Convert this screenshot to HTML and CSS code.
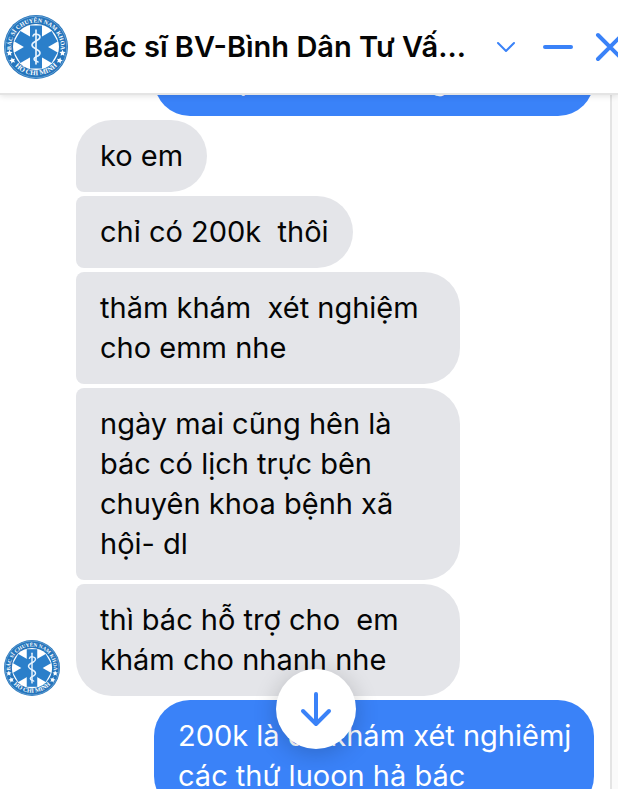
FILE: index.html
```html
<!DOCTYPE html>
<html lang="vi">
<head>
    <meta charset="UTF-8">
    <meta name="viewport" content="width=device-width, initial-scale=1.0">
    <title>Chat</title>
    <link rel="stylesheet" href="styles.css">
</head>
<body>
    <!-- Clinic badge, shared by the header and the message list -->
    <svg class="symbols" width="0" height="0" aria-hidden="true">
        <symbol id="badge" viewBox="0 0 64 64">
            <circle cx="32" cy="32" r="32" fill="#2474bb"/>
            <circle cx="32" cy="32" r="30.8" fill="none" stroke="#8dbbe2" stroke-width="0.6"/>
            <circle cx="32" cy="32" r="23" fill="#fff"/>
            <g fill="#2b7fca">
                <rect x="26" y="10.5" width="12" height="43"/>
                <rect x="26" y="10.5" width="12" height="43" transform="rotate(60 32 32)"/>
                <rect x="26" y="10.5" width="12" height="43" transform="rotate(120 32 32)"/>
            </g>
            <path d="M32 15V49" stroke="#fff" stroke-width="1.5" stroke-linecap="round"/>
            <path d="M29 21C30 18 36 19 36 22C36 26 28 26 28 30C28 34 36 34 36 38C36 42 30 41 30 44C30 46 33 46 34 47" fill="none" stroke="#e8f4ff" stroke-width="1.6" stroke-linecap="round"/>
            <path id="arc-top" d="M7.5 36A24.8 24.8 0 1 1 56.5 36" fill="none"/>
            <path id="arc-bottom" d="M6 44A29 29 0 0 0 58 44" fill="none"/>
            <text class="badge-text"><textPath href="#arc-top" startOffset="50%">BÁC SĨ CHUYÊN NAM KHOA</textPath></text>
            <text class="badge-text badge-city"><textPath href="#arc-bottom" startOffset="50%">HỒ CHÍ MINH</textPath></text>
            <g fill="#fff">
                <path id="star" d="M5.5 34.8l.9 2 2.2.3-1.6 1.5.4 2.2-1.9-1.1-1.9 1.1.4-2.2-1.6-1.5 2.2-.3z"/>
                <use href="#star" transform="rotate(-17 32 32)"/>
                <use href="#star" x="53"/>
                <use href="#star" x="53" transform="rotate(17 32 32)"/>
            </g>
        </symbol>
    </svg>

    <div class="chat">
        <header class="chat-header">
            <svg class="header-avatar" role="img" aria-label="Bác sĩ"><use href="#badge"/></svg>
            <h1 class="chat-title">Bác sĩ BV-Bình Dân Tư Vấ...</h1>
            <div class="actions">
                <button class="icon-button" type="button" aria-label="Menu">
                    <svg width="20" height="12" viewBox="0 0 20 12"><path d="M2 2l8 8 8-8" stroke-width="2"/></svg>
                </button>
                <button class="icon-button" type="button" aria-label="Thu nhỏ">
                    <svg width="32" height="32" viewBox="0 0 32 32"><path d="M3 16H29" stroke-width="4"/></svg>
                </button>
                <button class="icon-button" type="button" aria-label="Đóng">
                    <svg width="32" height="32" viewBox="0 0 32 32"><path d="M4 4L28 28M28 4L4 28" stroke-width="4"/></svg>
                </button>
            </div>
        </header>

        <main class="chat-body">
            <div class="messages">
                <div class="bubble sent previous"><span>ạ</span><span>g</span></div>
                <div class="group">
                    <svg class="avatar" role="img" aria-label="Bác sĩ"><use href="#badge"/></svg>
                    <div class="bubbles">
                        <div class="bubble received">ko em</div>
                        <div class="bubble received">chỉ có 200k  thôi</div>
                        <div class="bubble received long">thăm khám  xét nghiệm<br>cho emm nhe</div>
                        <div class="bubble received long">ngày mai cũng hên là<br>bác có lịch trực bên<br>chuyên khoa bệnh xã<br>hội- dl</div>
                        <div class="bubble received long">thì bác hỗ trợ cho  em<br>khám cho nhanh nhe</div>
                    </div>
                </div>
                <div class="bubble sent">200k là đc khám xét nghiêmj<br>các thứ luoon hả bác</div>
            </div>
            <button class="scroll-down" type="button" aria-label="Xuống cuối">
                <svg width="32" height="36" viewBox="0 0 32 36"><path d="M16 3V32M3 20L16 33L29 20" stroke-width="4"/></svg>
            </button>
        </main>
    </div>
</body>
</html>
```
FILE: styles.css
```css
* {
    box-sizing: border-box;
}

body {
    margin: 0;
    background: #fff;
    color: #050505;
    font-family: Inter, "Liberation Sans", sans-serif;
}

.symbols {
    position: absolute;
}

.badge-text {
    fill: #fff;
    font-family: "Liberation Serif", serif;
    font-size: 6px;
    font-weight: bold;
    text-anchor: middle;
}

.badge-city {
    font-size: 7px;
}

.chat {
    display: flex;
    flex-direction: column;
    height: 100vh;
    padding-bottom: 12px;
    overflow: hidden;
}

.chat-header {
    display: flex;
    flex-shrink: 0;
    align-items: center;
    gap: 16px;
    height: 95px;
    padding-left: 4px;
    border-bottom: 2px solid #e4e4e4;
    box-shadow: 0 1px 6px rgba(0, 0, 0, 0.12);
    z-index: 1;
}

.header-avatar {
    flex-shrink: 0;
    width: 64px;
    height: 64px;
}

.chat-title {
    flex: 1;
    margin: 0;
    font-size: 29px;
    font-weight: 600;
    line-height: 40px;
    white-space: nowrap;
}

.actions {
    display: flex;
    flex-shrink: 0;
    align-items: center;
    gap: 20px;
    margin-right: -8px;
}

.icon-button,
.scroll-down {
    display: flex;
    align-items: center;
    justify-content: center;
    padding: 0;
    border: 0;
    background: none;
    cursor: pointer;
}

.icon-button {
    min-width: 32px;
    height: 32px;
}

.icon-button svg,
.scroll-down svg {
    fill: none;
    stroke: #3a82f8;
    stroke-linecap: round;
    stroke-linejoin: round;
}

.chat-body {
    position: relative;
    flex: 1;
    min-height: 0;
    padding-right: 6px;
    background: #fafafa;
    overflow: hidden;
}

.messages {
    display: flex;
    flex-direction: column;
    gap: 4px;
    min-height: 100%;
    padding: 0 16px 0 4px;
    border-right: 2px solid #e4e4e4;
    background: #fff;
}

.group {
    display: flex;
    align-items: flex-end;
    gap: 16px;
}

.avatar {
    flex-shrink: 0;
    width: 56px;
    height: 56px;
}

.bubbles {
    display: flex;
    flex: 1;
    flex-direction: column;
    align-items: flex-start;
    gap: 4px;
}

.bubble {
    padding: 16px 24px;
    border-radius: 36px;
    font-size: 29px;
    line-height: 40px;
    white-space: pre;
}

.received {
    background: #e4e5e9;
    border-radius: 8px 36px 36px 8px;
}

.received:first-child {
    border-top-left-radius: 36px;
}

.received:last-child {
    border-bottom-left-radius: 36px;
}

.long {
    width: 100%;
    max-width: 384px;
}

.sent {
    align-self: flex-end;
    width: 440px;
    background: #3a82f8;
    color: #fff;
}

/* scrolled mostly under the header */
.previous {
    display: grid;
    grid-template-columns: 1fr 2fr;
    margin-top: -51px;
    text-align: center;
}

.scroll-down {
    position: absolute;
    bottom: 40px;
    left: 276px;
    width: 80px;
    height: 80px;
    border-radius: 50%;
    background: #fff;
    box-shadow: 0 4px 24px rgba(0, 0, 0, 0.2);
}
```
